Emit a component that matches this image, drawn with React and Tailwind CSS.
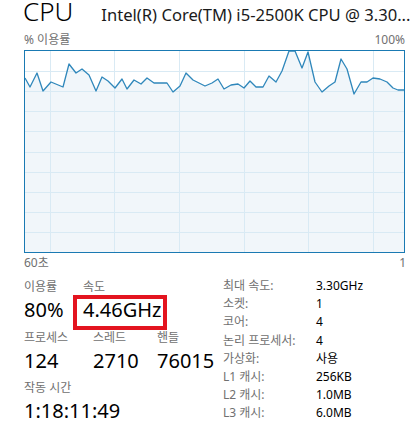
import React from "react";

const RAW = [
  [24, 78], [30, 87], [37, 73], [43, 91], [51, 82], [63, 87], [69, 64], [76, 73], [82, 69], [89, 75],
  [96, 91], [102, 77], [108, 81], [115, 88], [122, 79], [127, 89], [134, 80], [141, 84], [147, 78], [154, 83],
  [167, 83], [173, 92], [180, 86], [186, 73], [193, 80], [205, 86], [212, 83], [218, 79], [224, 89], [231, 85],
  [238, 84], [244, 88], [250, 81], [256, 87], [263, 87], [269, 76], [276, 82], [282, 71], [289, 51], [295, 51],
  [302, 68], [308, 52], [315, 82], [322, 92], [329, 86], [335, 82], [341, 59], [347, 69], [354, 94], [361, 82],
  [367, 82], [373, 78], [380, 79], [387, 82], [393, 88], [398, 90], [405, 90],
];

const W = 379;
const H = 201;
const PTS = RAW.map(([x, y]) => [Math.max(0, Math.min(W, x - 25)), y - 51]);
const LINE = PTS.map((p) => p.join(",")).join(" ");
const AREA = `0,${H} ${LINE} ${W},${H}`;
const VX = [25, 89, 154, 219, 283, 348];
const HY = [1, 2, 3, 4, 5, 6, 7, 8, 9].map((k) => Math.round((H / 10) * k) + 0.5);

function Graph() {
  return (
    <div className="w-[381px] h-[203px] border border-[#1a7ab3] bg-white">
      <svg width={W} height={H} viewBox={`0 0 ${W} ${H}`} className="block">
        <polygon points={AREA} fill="#f1f6fa" />
        {VX.map((x) => (
          <line key={"v" + x} x1={x + 0.5} y1={0} x2={x + 0.5} y2={H} stroke="#d9eaf4" strokeWidth="1" />
        ))}
        {HY.map((y) => (
          <line key={"h" + y} x1={0} y1={y} x2={W} y2={y} stroke="#d9eaf4" strokeWidth="1" />
        ))}
        <polyline points={LINE} fill="none" stroke="#2f87bb" strokeWidth="1.3" strokeLinejoin="round" />
      </svg>
    </div>
  );
}

const rightRows = [
  ["최대 속도:", "3.30GHz"],
  ["소켓:", "1"],
  ["코어:", "4"],
  ["논리 프로세서:", "4"],
  ["가상화:", "사용"],
  ["L1 캐시:", "256KB"],
  ["L2 캐시:", "1.0MB"],
  ["L3 캐시:", "6.0MB"],
];

export default function App() {
  return (
    <div
      className="relative w-[415px] h-[436px] overflow-hidden bg-white text-black"
      style={{ fontFamily: '"Noto Sans", "Noto Sans CJK KR", sans-serif' }}
    >
      <div className="flex items-baseline h-[22px] pl-[23px] whitespace-nowrap">
        <span className="text-[26px] leading-[22px] font-light">CPU</span>
        <span className="ml-[28px] text-[16.6px] leading-[22px] text-[#1a1a1a]">
          Intel(R) Core(TM) i5-2500K CPU @ 3.30...
        </span>
      </div>

      <div className="flex justify-between w-[405px] pl-[24px] mt-[11px] h-[14px] text-[12px] leading-[14px] text-[#707070]">
        <span>% 이용률</span>
        <span>100%</span>
      </div>

      <div className="pl-[24px] mt-[3px]">
        <Graph />
      </div>

      <div className="flex justify-between w-[406px] pl-[24px] mt-[3px] h-[14px] text-[12px] leading-[14px] text-[#707070]">
        <span>60초</span>
        <span>1</span>
      </div>

      <div className="flex pl-[24px]">
        <div className="w-[199px] flex flex-col">
          <div className="flex mt-[10px] h-[14px] text-[12px] leading-[14px] text-[#707070]">
            <span className="w-[59px]">이용률</span>
            <span>속도</span>
          </div>
          <div className="flex mt-[4px] h-[24px] text-[20px] leading-[24px]">
            <span className="w-[59px]">80%</span>
            <span>4.46GHz</span>
          </div>

          <div className="flex mt-[9px] h-[14px] text-[12px] leading-[14px] text-[#707070]">
            <span className="w-[69px]">프로세스</span>
            <span className="w-[64px]">스레드</span>
            <span>핸들</span>
          </div>
          <div className="flex mt-[4px] h-[24px] text-[20px] leading-[24px] whitespace-nowrap">
            <span className="w-[69px]">124</span>
            <span className="w-[64px]">2710</span>
            <span>76015</span>
          </div>

          <div className="mt-[8px] h-[14px] text-[12px] leading-[14px] text-[#707070]">작동 시간</div>
          <div className="mt-[4px] h-[24px] text-[20px] leading-[24px]">1:18:11:49</div>
        </div>

        <div className="flex flex-col mt-[7px] text-[12px] leading-[18.2px]">
          {rightRows.map(([k, v]) => (
            <div key={k} className="flex h-[18.2px]">
              <span className="w-[93px] text-[#707070]">{k}</span>
              <span>{v}</span>
            </div>
          ))}
        </div>
      </div>

      <div className="absolute left-[73px] top-[295px] w-[94px] h-[35px] border-4 border-[#e3141f]" />
    </div>
  );
}
